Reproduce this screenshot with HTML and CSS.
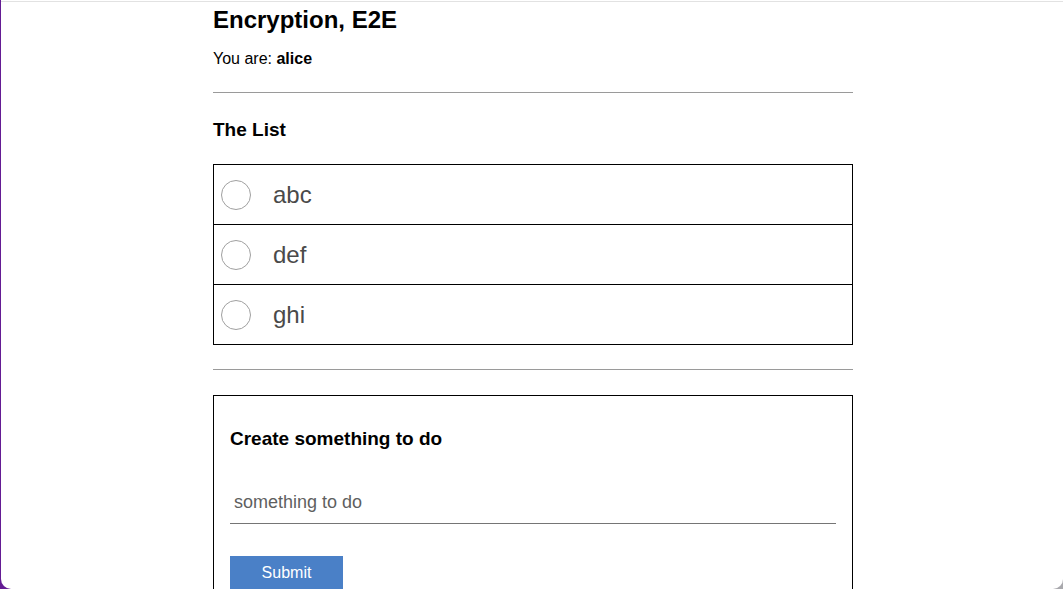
FILE: index.html
```html
<!DOCTYPE html>
<html lang="en">
<head>
<meta charset="utf-8">
<title>Encryption, E2E</title>
<link rel="stylesheet" href="styles.css">
</head>
<body>
<div class="window">
  <main class="page">
    <h1 class="title">Encryption, E2E</h1>
    <p class="who">You are: <strong>alice</strong></p>
    <hr class="rule rule-top">
    <h2 class="section-title">The List</h2>
    <ul class="todo-list">
      <li class="todo"><span class="check"></span><span class="todo-text">abc</span></li>
      <li class="todo"><span class="check"></span><span class="todo-text">def</span></li>
      <li class="todo"><span class="check"></span><span class="todo-text">ghi</span></li>
    </ul>
    <hr class="rule rule-mid">
    <form class="create">
      <h3 class="create-title">Create something to do</h3>
      <input class="create-input" type="text" placeholder="something to do">
      <button class="submit" type="button">Submit</button>
    </form>
  </main>
</div>
</body>
</html>
```

FILE: styles.css
```css
html, body {
  margin: 0;
  padding: 0;
  height: 100%;
}

body {
  background: linear-gradient(to right, #641c94 0%, #7a4a9a 40%, #a9a9ad 100%);
  font-family: "Liberation Sans", Arial, sans-serif;
  overflow: hidden;
}

.window {
  margin-left: 1px;
  height: 100vh;
  box-sizing: border-box;
  padding: 6px 0 0 2px;
  background-color: #ffffff;
  background-image: linear-gradient(#e2e2e2, #e2e2e2);
  background-size: 100% 1px;
  background-position: 0 1px;
  background-repeat: no-repeat;
  border-radius: 0 0 10px 10px;
  overflow: hidden;
}

.page {
  width: 640px;
  margin: 0 auto;
  display: flex;
  flex-direction: column;
}

.title {
  margin: 0;
  font-size: 24px;
  line-height: 28px;
  font-weight: bold;
  color: #000;
}

.who {
  margin: 15px 0 0;
  font-size: 16px;
  line-height: 20px;
  color: #000;
}

.rule {
  width: 100%;
  margin: 0;
  border: 0;
  height: 1px;
  background: #9a9a9a;
}

.rule-top {
  margin-top: 23px;
}

.section-title {
  margin: 25px 0 0;
  font-size: 19px;
  line-height: 24px;
  font-weight: bold;
  color: #000;
}

.todo-list {
  list-style: none;
  margin: 22px 0 0;
  padding: 0;
  border: 1px solid #000;
}

.todo {
  height: 59px;
  display: flex;
  align-items: center;
  border-bottom: 1px solid #000;
}

.todo:last-child {
  border-bottom: 0;
}

.check {
  width: 28px;
  height: 28px;
  margin-left: 7px;
  border: 1px solid #a0a0a0;
  border-radius: 50%;
  flex: none;
}

.todo-text {
  margin-left: 22px;
  font-size: 24px;
  color: #4a4a4a;
}

.rule-mid {
  margin-top: 24px;
}

.create {
  margin-top: 25px;
  border: 1px solid #000;
  padding: 16px 16px 40px;
  display: flex;
  flex-direction: column;
  align-items: flex-start;
}

.create-title {
  margin: 15px 0 0;
  font-size: 19px;
  line-height: 24px;
  font-weight: bold;
  color: #000;
}

.create-input {
  margin-top: 34px;
  width: 100%;
  box-sizing: border-box;
  height: 39px;
  padding: 0 4px 3px;
  border: 0;
  border-bottom: 1px solid #757575;
  font-family: "Liberation Sans", Arial, sans-serif;
  font-size: 18px;
  color: #333;
  outline: none;
  background: transparent;
}

.create-input::placeholder {
  color: #5f5f5f;
}

.submit {
  margin-top: 32px;
  width: 113px;
  height: 34px;
  border: 0;
  background: #4a80c7;
  color: #fff;
  font-family: "Liberation Sans", Arial, sans-serif;
  font-size: 16px;
  padding: 0;
}
```
